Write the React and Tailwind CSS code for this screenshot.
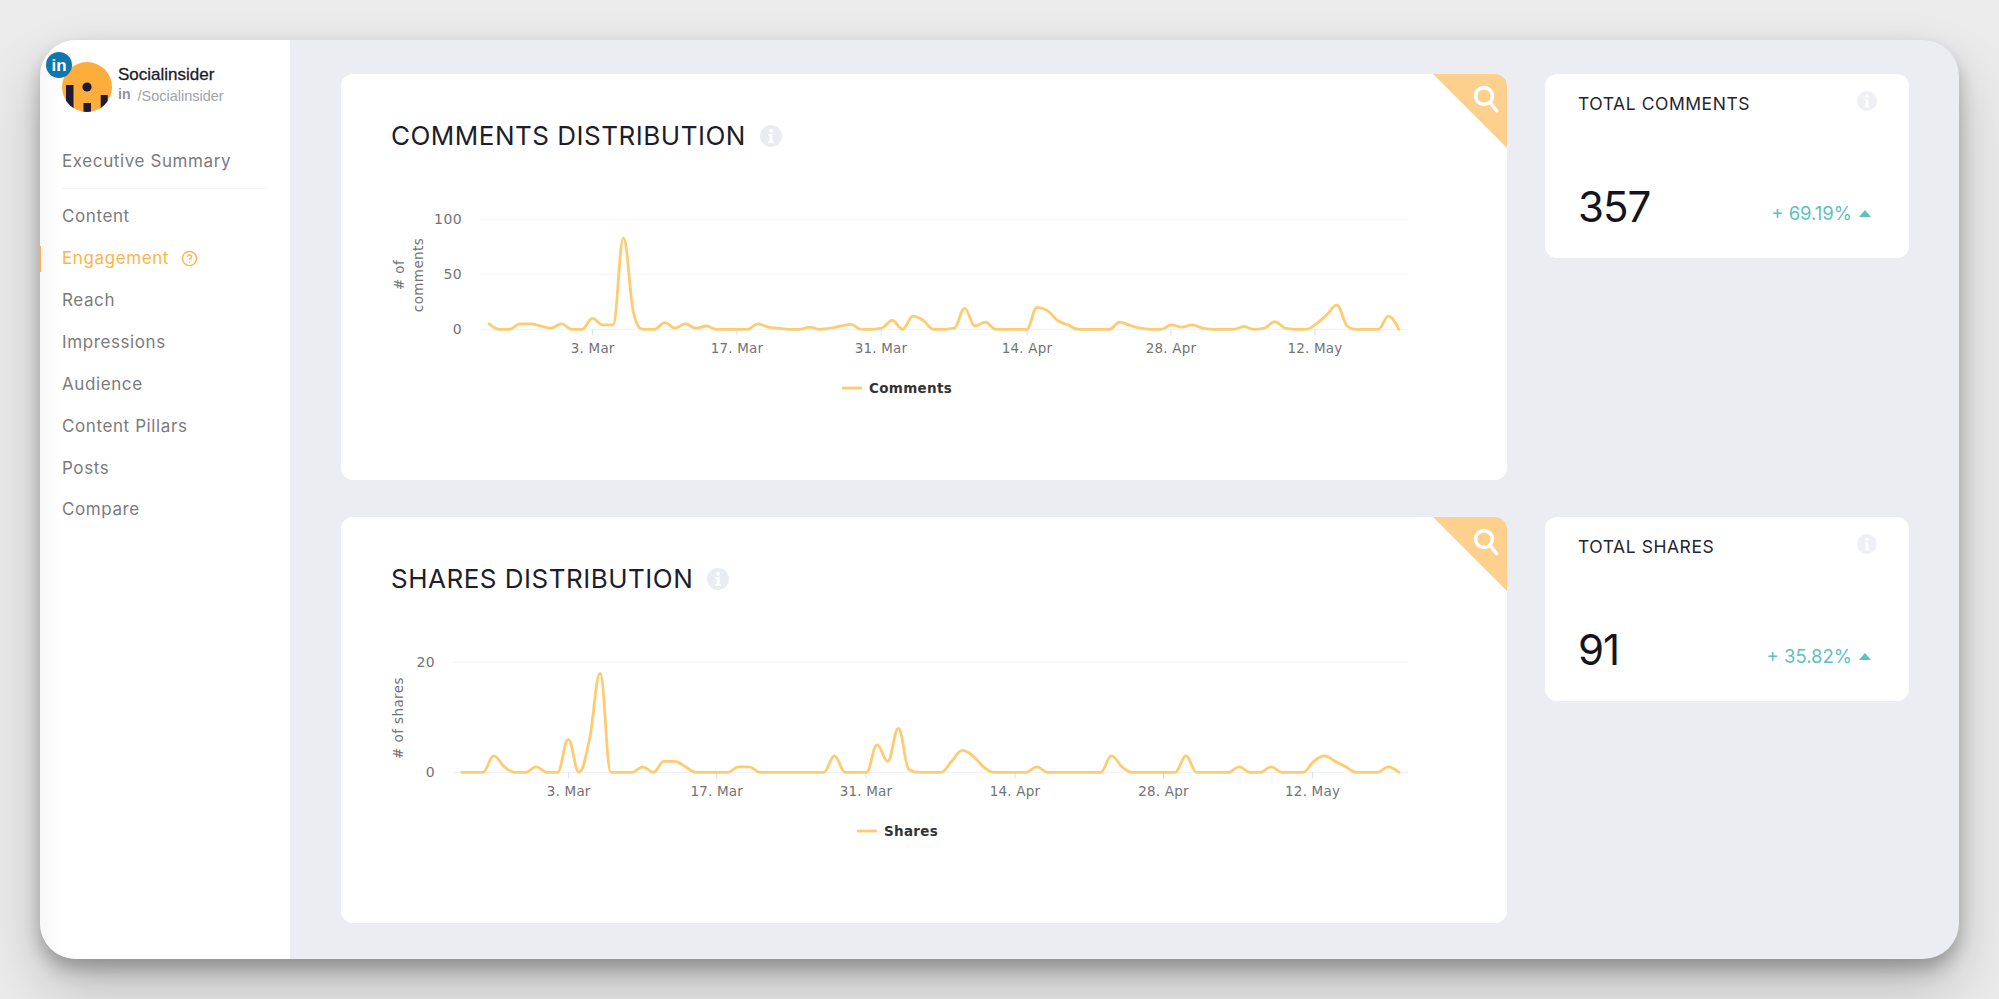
import React from "react";
import { CircleHelp } from "lucide-react";

const navItems = ["Content", "Engagement", "Reach", "Impressions", "Audience", "Content Pillars", "Posts", "Compare"];

// daily values, read off the reference
const comments = [5, 0, 0, 5, 5, 3, 1, 5, 0, 0, 10, 4, 4, 83, 14, 0, 0, 6, 1, 5, 1, 3, 0, 0, 0, 0, 5, 2, 1, 0, 0, 2, 0, 1, 3, 4.5, 0, 0, 1, 8, 0, 12, 8, 0, 0, 1, 19, 3, 6.5, 0, 0, 0, 0, 20, 17, 8, 4, 0, 0, 0, 0, 6.5, 3.5, 1, 0, 0, 4, 2, 4, 1, 0, 0, 0, 2.5, 0, 1, 7, 1, 0, 0, 5, 13, 22, 3, 0, 0, 0, 12, 0];
const shares = [0, 0, 0, 3, 1, 0, 0, 1, 0, 0, 6, 0, 6, 18, 0, 0, 0, 1, 0, 2, 2, 1, 0, 0, 0, 0, 1, 1, 0, 0, 0, 0, 0, 0, 0, 3, 0, 0, 0, 5, 2, 8, 0.5, 0, 0, 0, 2, 4, 3, 1, 0, 0, 0, 0, 1, 0, 0, 0, 0, 0, 0, 3, 1, 0, 0, 0, 0, 0, 3, 0, 0, 0, 0, 1, 0, 0, 1, 0, 0, 0, 2, 3, 2, 1, 0, 0, 0, 1, 0];

// same curve shape as a highcharts spline
const splinePath = (pts) => {
  const smoothing = 1.5;
  let d = `M${pts[0][0]} ${pts[0][1]}`;
  const conts = pts.map(([x, y], i) => {
    if (i === 0 || i === pts.length - 1) return [x, y, x, y];
    const [lx, ly] = pts[i - 1];
    const [nx, ny] = pts[i + 1];
    const lcx = (smoothing * x + lx) / (smoothing + 1);
    let lcy = (smoothing * y + ly) / (smoothing + 1);
    const rcx = (smoothing * x + nx) / (smoothing + 1);
    let rcy = (smoothing * y + ny) / (smoothing + 1);
    const correction = ((rcy - lcy) * (rcx - x)) / (rcx - lcx) + y - rcy;
    lcy += correction;
    rcy += correction;
    if (lcy > ly && lcy > y) {
      lcy = Math.max(ly, y);
      rcy = 2 * y - lcy;
    } else if (lcy < ly && lcy < y) {
      lcy = Math.min(ly, y);
      rcy = 2 * y - lcy;
    }
    if (rcy > ny && rcy > y) {
      rcy = Math.max(ny, y);
      lcy = 2 * y - rcy;
    } else if (rcy < ny && rcy < y) {
      rcy = Math.min(ny, y);
      lcy = 2 * y - rcy;
    }
    return [lcx, lcy, rcx, rcy];
  });
  for (let i = 1; i < pts.length; i++) {
    d += `C${conts[i - 1][2]} ${conts[i - 1][3]} ${conts[i][0]} ${conts[i][1]} ${pts[i][0]} ${pts[i][1]}`;
  }
  return d;
};

const tickLabels = ["3. Mar", "17. Mar", "31. Mar", "14. Apr", "28. Apr", "12. May"];

const Chart = ({ data, max, yTicks, gridX, startX, stepX, ticks, yLabelX, yTitle, legend, legendX }) => {
  const zero = 149.3;
  const top = 39.3;
  const toY = (v) => zero - (v / max) * (zero - top);
  const pts = data.map((v, i) => [startX + stepX * i, toY(v)]);
  return (
    <svg viewBox="0 0 1166 300" className="block w-[1166px] h-[300px] font-['DejaVu_Sans',sans-serif]">
      {yTicks.filter((v) => v > 0).map((v) => (
        <line key={v} x1={gridX} x2="1067" y1={toY(v)} y2={toY(v)} stroke="#f6f6f7" strokeWidth="1" />
      ))}
      <line x1={gridX} x2="1067" y1={zero} y2={zero} stroke="#eef0f8" strokeWidth="1" />
      {ticks.map((x, i) => (
        <g key={x}>
          <line x1={x} x2={x} y1={zero} y2={zero + 6} stroke="#d5def0" strokeWidth="1" />
          <text x={x} y={zero + 24} textAnchor="middle" fontSize="13.5" fill="#737373" letterSpacing="0.2">
            {tickLabels[i]}
          </text>
        </g>
      ))}
      {yTicks.map((v) => (
        <text key={v} x={yLabelX} y={toY(v) + 5} textAnchor="end" fontSize="14" fill="#737373" letterSpacing="0.4">
          {v}
        </text>
      ))}
      {yTitle.map((t) => (
        <text key={t.text} transform={`translate(${t.x} 95) rotate(-90)`} textAnchor="middle" fontSize="13.5" fill="#737373" letterSpacing="0.4">
          {t.text}
        </text>
      ))}
      <path d={splinePath(pts)} fill="none" stroke="#ffcb70" strokeWidth="2.8" strokeLinejoin="round" strokeLinecap="round" />
      <line x1={legendX} x2={legendX + 20} y1="208" y2="208" stroke="#ffcb70" strokeWidth="2.8" />
      <text x={legendX + 27} y="213" fontSize="13.5" fontWeight="700" fill="#333333" letterSpacing="0.3">
        {legend}
      </text>
    </svg>
  );
};

const InfoDot = ({ size, fill }) => (
  <svg width={size} height={size} viewBox="0 0 22 22" className="shrink-0">
    <circle cx="11" cy="11" r="11" fill={fill} />
    <circle cx="11" cy="5.8" r="2" fill="#fff" />
    <path d="M8.6 9h3.9v7h1.2v2H8.4v-2h1.3v-5H8.6z" fill="#fff" />
  </svg>
);

const Corner = () => (
  <svg viewBox="0 0 74 74" className="absolute top-0 right-0 w-[74px] h-[74px]">
    <path d="M0 0H74V74Z" fill="#fed08e" />
    <circle cx="51" cy="22" r="8.4" fill="none" stroke="#fff" strokeWidth="3.6" />
    <path d="M57.5 29 L63.5 36.5" stroke="#fff" strokeWidth="3.6" strokeLinecap="round" />
  </svg>
);

const ChartCard = ({ title, children }) => (
  <div className="relative w-[1166px] h-[406px] bg-white rounded-xl overflow-hidden">
    <Corner />
    <div className="flex items-center gap-[14px] h-[34px] mt-[45px] mb-[27px] pl-[50px]">
      <h2 className="text-[26px] leading-none font-normal text-[#1d1d2b] tracking-[0.5px] font-['Inter',sans-serif]">{title}</h2>
      <InfoDot size={22} fill="#e9edf1" />
    </div>
    {children}
  </div>
);

const StatCard = ({ title, value, delta }) => (
  <div className="w-[364px] h-[184px] bg-white rounded-xl px-[33px] font-['Inter',sans-serif]">
    <div className="flex items-center justify-between h-[24px] mt-[15px]">
      <span className="text-[17.5px] leading-none text-[#24242f] tracking-[0.55px] translate-y-[3px]">{title}</span>
      <span className="mr-[-1px]">
        <InfoDot size={20} fill="#eef0f5" />
      </span>
    </div>
    <div className="flex items-center justify-between mt-[69px] h-[50px]">
      <span className="text-[42px] leading-none text-[#14141c] tracking-[-1px]">{value}</span>
      <span className="flex items-center gap-[7px] mr-[5px] translate-y-[6px] text-[18.5px] leading-none text-[#5cc2bd]">
        {delta}
        <svg width="12" height="7" viewBox="0 0 12 7">
          <path d="M6 0 12 7H0Z" fill="#5cc2bd" />
        </svg>
      </span>
    </div>
  </div>
);

const Sidebar = () => (
  <aside className="w-[250px] shrink-0 h-full px-[22px] pt-[22px] bg-[linear-gradient(90deg,#f7f7f7,#ffffff_22px)] font-['Inter',sans-serif]">
    <div className="relative flex items-start h-[50px]">
      <svg width="50" height="50" viewBox="0 0 50 50" className="shrink-0">
        <defs>
          <clipPath id="avatarClip">
            <circle cx="25" cy="25" r="25" />
          </clipPath>
        </defs>
        <circle cx="25" cy="25" r="25" fill="#fdad3c" />
        <g clipPath="url(#avatarClip)" fill="#1e1934">
          <rect x="4" y="23" width="7.5" height="27" />
          <rect x="21.5" y="41" width="7.5" height="9" />
          <rect x="38.7" y="33" width="7" height="17" />
          <circle cx="25" cy="25" r="4.6" />
        </g>
      </svg>
      <div className="absolute left-[-16px] top-[-10px] w-[26px] h-[26px] rounded-full bg-[#0f77ab] flex items-center justify-center text-white text-[17px] leading-none font-bold font-['Liberation_Sans',sans-serif]">
        in
      </div>
      <div className="ml-[6px] font-['Liberation_Sans',sans-serif]">
        <div className="text-[17px] leading-[20px] mt-[3px] text-[#1b1b2a] [-webkit-text-stroke:0.3px_#1b1b2a]">Socialinsider</div>
        <div className="flex items-center gap-[7px] mt-[4px] leading-none text-[#9ea3aa]">
          <span className="text-[14px] font-bold text-[#8f9399] -translate-y-[2px]">in</span>
          <span className="text-[14.5px]">/Socialinsider</span>
        </div>
      </div>
    </div>
    <nav className="mt-[30px] text-[17px] tracking-[0.6px] text-[#7b7b7e]">
      <div className="h-[40px] flex items-center">Executive Summary</div>
      <div className="h-px w-[203px] bg-[#f0f2f5] mt-[6px] mb-[7px]" />
      {navItems.map((item) => (
        <div key={item} className={`relative h-[41.9px] flex items-center ${item === "Engagement" ? "text-[#fdb44c]" : ""}`}>
          {item === "Engagement" && <span className="absolute left-[-23px] top-[8px] w-[2px] h-[26px] bg-[#fdb44c]" />}
          {item}
          {item === "Engagement" && <CircleHelp size={17} strokeWidth={2} className="ml-[12px] text-[#fdb44c]" />}
        </div>
      ))}
    </nav>
  </aside>
);

export default function App() {
  return (
    <div className="w-[1999px] h-[999px] overflow-hidden bg-[#ebebeb] p-[40px]">
      <div className="flex h-[919px] w-[1919px] rounded-[36px] overflow-hidden bg-[#ecedf3] shadow-[0_10px_18px_rgba(0,0,0,0.26),0_30px_60px_rgba(0,0,0,0.2)]">
        <Sidebar />
        <main className="flex-1 flex flex-col gap-[37px] pt-[34px] pl-[51px]">
          <div className="flex gap-[38px] items-start">
            <ChartCard title="COMMENTS DISTRIBUTION">
              <Chart
                data={comments}
                max={100}
                yTicks={[100, 50, 0]}
                gridX={139.7}
                startX={148}
                stepX={10.34}
                ticks={[251.7, 396, 540, 686, 830, 974]}
                yLabelX={121}
                yTitle={[
                  { text: "# of", x: 63 },
                  { text: "comments", x: 82 },
                ]}
                legend="Comments"
                legendX={501}
              />
            </ChartCard>
            <StatCard title="TOTAL COMMENTS" value="357" delta="+ 69.19%" />
          </div>
          <div className="flex gap-[38px] items-start">
            <ChartCard title="SHARES DISTRIBUTION">
              <Chart
                data={shares}
                max={20}
                yTicks={[20, 0]}
                gridX={112}
                startX={120.7}
                stepX={10.65}
                ticks={[227.7, 375.7, 525, 674, 822.5, 971.6]}
                yLabelX={94}
                yTitle={[{ text: "# of shares", x: 62 }]}
                legend="Shares"
                legendX={516}
              />
            </ChartCard>
            <StatCard title="TOTAL SHARES" value="91" delta="+ 35.82%" />
          </div>
        </main>
      </div>
    </div>
  );
}
